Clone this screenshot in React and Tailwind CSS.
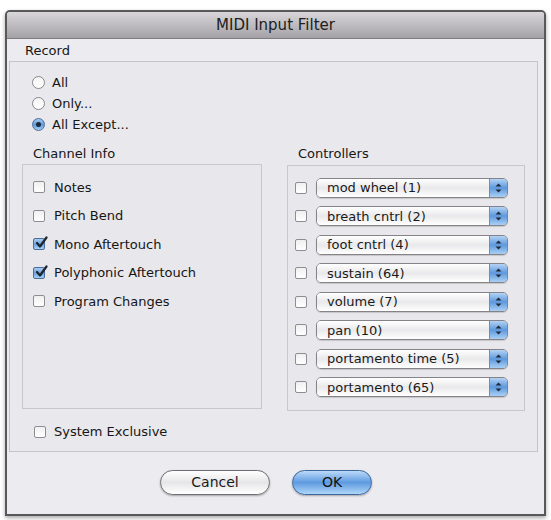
import React from "react";

const font = { fontFamily: '"DejaVu Sans", "Liberation Sans", sans-serif' };

function Radio({ checked }) {
  if (checked) {
    return (
      <div className="w-[13px] h-[13px] rounded-full border border-[#4a6f9c] bg-gradient-to-b from-[#a9cbef] via-[#5f99dc] to-[#a6cff4] flex items-center justify-center shrink-0">
        <div className="w-[5px] h-[5px] rounded-full bg-[#1b2a3c]" />
      </div>
    );
  }
  return (
    <div className="w-[13px] h-[13px] rounded-full border border-[#8a888c] bg-gradient-to-b from-[#f4f4f4] to-[#ffffff] shrink-0" />
  );
}

function Check({ checked }) {
  if (checked) {
    return (
      <div className="relative w-[12px] h-[12px] rounded-[2px] border border-[#4a6f9c] bg-gradient-to-b from-[#a9cbef] via-[#6aa1df] to-[#a6cff4] shrink-0">
        <svg className="absolute left-[1px] top-[-3px]" width="13" height="13" viewBox="0 0 13 13">
          <path d="M2 7 L5 10.5 L11.5 1.5" fill="none" stroke="#1c2430" strokeWidth="2.2" strokeLinecap="round" strokeLinejoin="round" />
        </svg>
      </div>
    );
  }
  return (
    <div className="w-[12px] h-[12px] rounded-[2px] border border-[#8f8d91] bg-gradient-to-b from-[#f0f0f0] to-[#ffffff] shrink-0" />
  );
}

function Popup({ label }) {
  return (
    <div className="flex w-[192px] h-[20px] rounded-[5px] border border-[#858387] overflow-hidden shadow-[0_1px_1px_rgba(0,0,0,0.15)]">
      <div className="flex-1 flex items-center pl-[10px] text-[13px] text-[#1a1a1a] bg-gradient-to-b from-[#ffffff] via-[#e9e9eb] to-[#ffffff]">
        {label}
      </div>
      <div className="w-[18px] flex flex-col items-center justify-center gap-[2px] bg-gradient-to-b from-[#b3d3f5] via-[#5d98dc] to-[#a9d0f5] border-l border-[#6c8fb8]">
        <svg width="7" height="4" viewBox="0 0 7 4"><path d="M0.5 3.5 L3.5 0.5 L6.5 3.5 Z" fill="#1e2a3a" /></svg>
        <svg width="7" height="4" viewBox="0 0 7 4"><path d="M0.5 0.5 L3.5 3.5 L6.5 0.5 Z" fill="#1e2a3a" /></svg>
      </div>
    </div>
  );
}

const channels = [
  ["Notes", false],
  ["Pitch Bend", false],
  ["Mono Aftertouch", true],
  ["Polyphonic Aftertouch", true],
  ["Program Changes", false],
];

const controllers = [
  "mod wheel (1)",
  "breath cntrl (2)",
  "foot cntrl (4)",
  "sustain (64)",
  "volume (7)",
  "pan (10)",
  "portamento time (5)",
  "portamento (65)",
];

export default function App() {
  return (
    <div className="w-[551px] h-[520px] bg-white pt-[10px] pl-[5px]" style={font}>
      <div className="w-[541px] h-[506px] border-2 border-[#58575a] rounded-t-[5px] bg-[#ecebef] flex flex-col overflow-hidden shadow-[0_2px_4px_rgba(0,0,0,0.35)]">
        <div className="h-[27px] shrink-0 bg-gradient-to-b from-[#d8d6d9] to-[#a4a2a6] border-b border-[#7d7c80] flex items-center justify-center text-[15px] text-[#202020]">
          MIDI Input Filter
        </div>
        <div className="flex flex-col text-[13px] text-[#161616]">
          <div className="h-[16px] mt-[4px] ml-[18px] flex items-center">Record</div>
          <div className="mt-[2px] ml-[2px] mr-[6px] h-[391px] border border-[#c6c4c8] bg-[#e9e8ec] flex flex-col">
            <div className="pt-[10px] pl-[22px] flex flex-col">
              {[["All", false], ["Only...", false], ["All Except...", true]].map(([t, c]) => (
                <div key={t} className="h-[21px] flex items-center gap-[7px]">
                  <Radio checked={c} />
                  <span>{t}</span>
                </div>
              ))}
            </div>
            <div className="mt-[11px] pl-[12px] flex gap-[25px]">
              <div className="flex flex-col w-[240px]">
                <div className="h-[16px] ml-[11px] flex items-center">Channel Info</div>
                <div className="mt-[2px] h-[245px] border border-[#c9c7cb] bg-[#e8e7eb] pt-[8px] pl-[10px] flex flex-col">
                  {channels.map(([t, c]) => (
                    <div key={t} className="h-[28.5px] flex items-center gap-[9px]">
                      <Check checked={c} />
                      <span>{t}</span>
                    </div>
                  ))}
                </div>
              </div>
              <div className="flex flex-col w-[238px]">
                <div className="h-[16px] ml-[11px] flex items-center">Controllers</div>
                <div className="mt-[3px] h-[246px] border border-[#c9c7cb] bg-[#e8e7eb] pt-[7.5px] pl-[7px] flex flex-col">
                  {controllers.map((t) => (
                    <div key={t} className="h-[28.5px] flex items-center gap-[9px]">
                      <Check checked={false} />
                      <Popup label={t} />
                    </div>
                  ))}
                </div>
              </div>
            </div>
            <div className="mt-[13px] pl-[24px] h-[16px] flex items-center gap-[8px]">
              <Check checked={false} />
              <span>System Exclusive</span>
            </div>
          </div>
          <div className="mt-[18px] ml-[153px] flex gap-[22px] text-[14px]">
            <div className="w-[110px] h-[25px] rounded-full border border-[#6e6d71] bg-gradient-to-b from-[#ffffff] via-[#e6e6e8] to-[#ffffff] flex items-center justify-center shadow-[0_1px_2px_rgba(0,0,0,0.3)] text-[#1a1a1a]">
              Cancel
            </div>
            <div className="w-[80px] h-[25px] rounded-full border border-[#3c679c] bg-gradient-to-b from-[#bcdaf8] via-[#5e9ae0] to-[#b0d6f8] flex items-center justify-center shadow-[0_1px_2px_rgba(0,0,0,0.3)] text-[#111]">
              OK
            </div>
          </div>
        </div>
      </div>
    </div>
  );
}
